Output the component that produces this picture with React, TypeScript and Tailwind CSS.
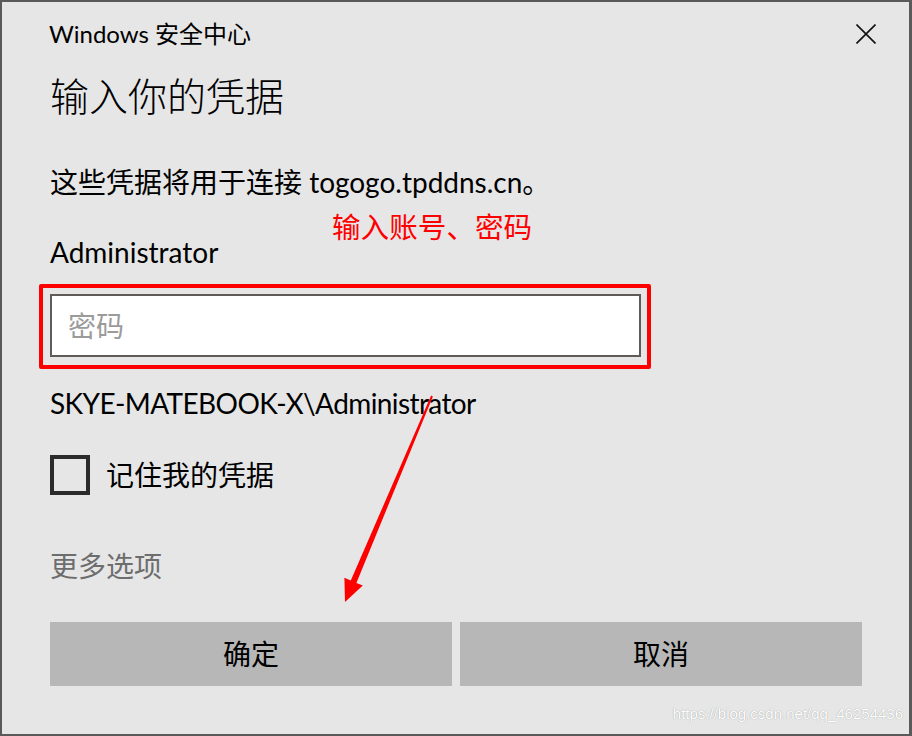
const latin = "font-['Lato','Noto_Sans_CJK_SC',sans-serif]";

const CloseIcon = () => (
  <svg width="20" height="20" viewBox="0 0 20 20" className="block">
    <path d="M0.5 0.5 L19.5 19.5 M19.5 0.5 L0.5 19.5" stroke="#111" strokeWidth="1.6" />
  </svg>
);

const Arrow = () => (
  <svg
    width="912"
    height="736"
    viewBox="0 0 912 736"
    className="absolute left-0 top-0 pointer-events-none"
  >
    <polygon
      points="431.1,395.6 432.9,396.4 356.4,582.9 362.8,585.6 345,602 344.4,577.8 350.8,580.5"
      fill="#ff0000"
    />
  </svg>
);

export default function App() {
  return (
    <div
      className={`relative w-[912px] h-[736px] overflow-hidden bg-[#e6e6e6] text-black ${latin} shadow-[inset_2px_2px_0_#5a5a5a,inset_-3px_-2px_0_#5a5a5a]`}
    >
      <div className="flex flex-col pl-[50px] pt-[1px]">
        {/* title bar */}
        <div className="flex h-[66px] items-center justify-between pr-[36px]">
          <span className="text-[24px] leading-none -ml-[1px]">Windows 安全中心</span>
          <CloseIcon />
        </div>

        <div className="flex h-[58px] items-center">
          <h1 className="text-[39px] font-light leading-none">输入你的凭据</h1>
        </div>

        <div className="mt-[36px] flex h-[42px] items-center text-[28px] leading-none">
          这些凭据将用于连接 togogo.tpddns.cn。
        </div>

        <div className="mt-[28px] flex h-[42px] items-center text-[28px] leading-none">
          Administrator
        </div>

        {/* password field */}
        <div className="relative mt-[21px] w-[591px]">
          <div className="flex h-[63px] items-center border-2 border-[#5e5b58] bg-white pl-[16px]">
            <span className="text-[28px] leading-none text-[#9b9b9b]">密码</span>
          </div>
          <div className="absolute -left-[11px] -top-[10px] -right-[10px] -bottom-[12px] rounded-[2px] border-4 border-[#ff0000]" />
        </div>

        <div className="mt-[25px] flex h-[42px] items-center text-[28px] leading-none tracking-[-0.6px]">
          SKYE-MATEBOOK-X\Administrator
        </div>

        <label className="mt-[31px] flex h-[40px] items-center gap-[16px]">
          <span className="block h-[40px] w-[40px] border-4 border-[#2b2b2b]" />
          <span className="text-[28px] leading-none">记住我的凭据</span>
        </label>

        <div className="mt-[50px] flex h-[42px] items-center text-[28px] leading-none text-[#6d6d6d]">
          更多选项
        </div>

        <div className="mt-[35px] flex gap-[8px] pr-[50px]">
          <button className="h-[64px] w-[402px] bg-[#b7b7b7] text-[28px] leading-none text-black">
            确定
          </button>
          <button className="h-[64px] w-[402px] bg-[#b7b7b7] text-[28px] leading-none text-black">
            取消
          </button>
        </div>
      </div>

      {/* annotations */}
      <div className="absolute left-[332px] top-[213px] text-[28.6px] leading-none text-[#ff0000]">
        输入账号、密码
      </div>
      <Arrow />
      <div className="absolute right-[9px] top-[706px] font-['Liberation_Sans',sans-serif] text-[15px] leading-none text-white [text-shadow:0_0_1px_#8a8a8a]">
        https://blog.csdn.net/qq_46254436
      </div>
    </div>
  );
}
